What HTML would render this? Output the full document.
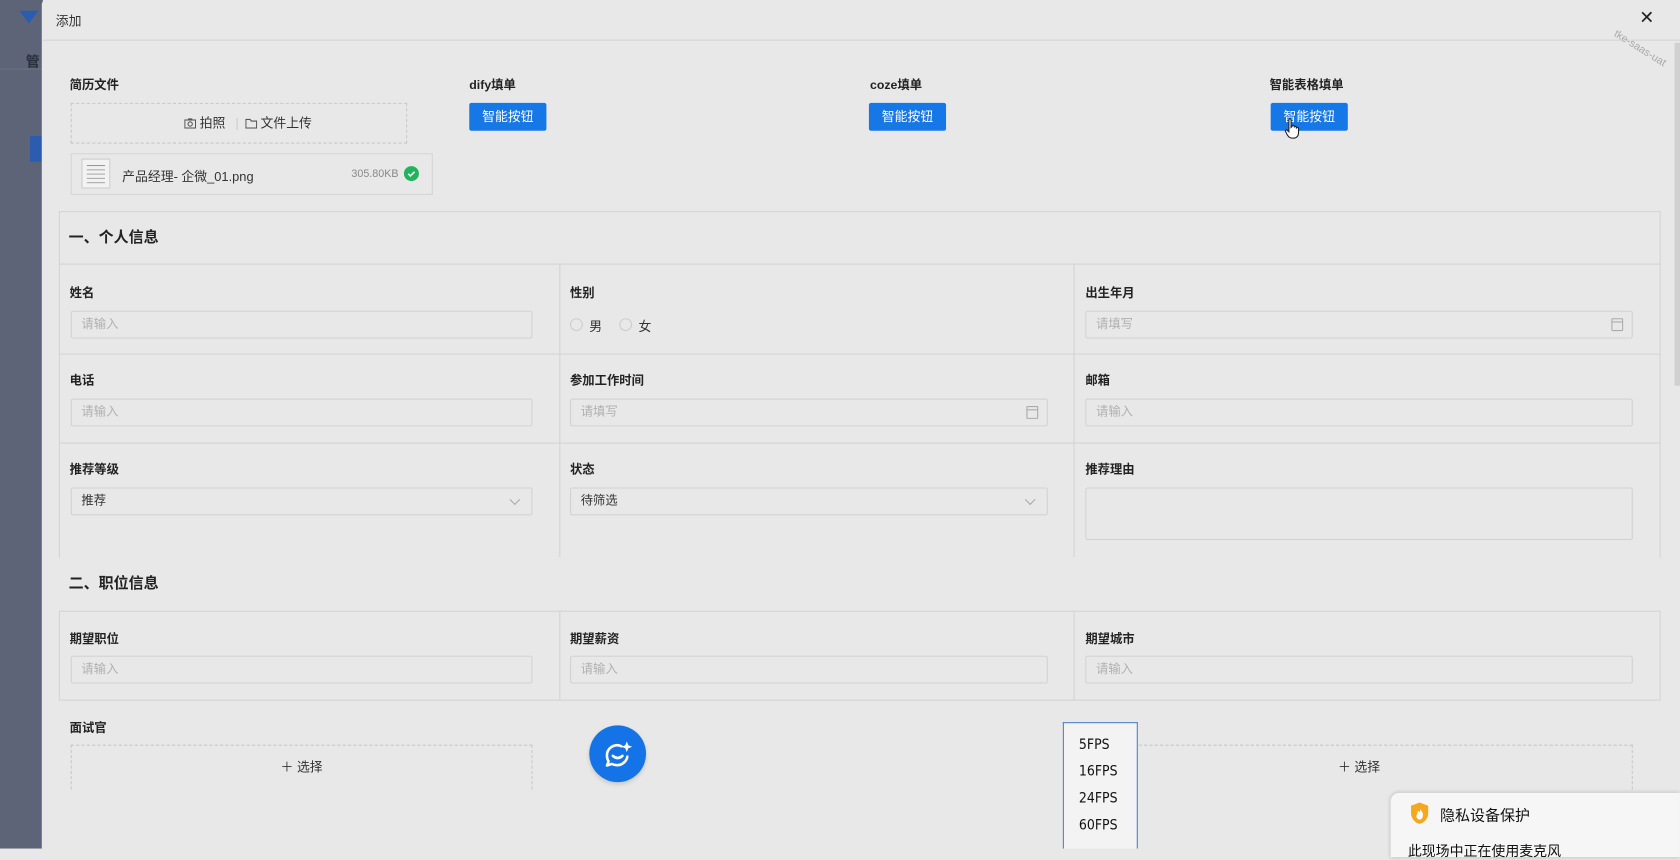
<!DOCTYPE html>
<html><head><meta charset="utf-8"><style>
*{margin:0;padding:0;box-sizing:border-box}
html,body{width:1680px;height:848px;overflow:hidden;background:#e8e8e8;font-family:"Liberation Sans","Noto Sans CJK SC",sans-serif}
#w{position:absolute;left:0;top:0;width:1568px;height:792px;transform:scale(1.0714);transform-origin:0 0}
.a{position:absolute}
.lbl{position:absolute;font-size:11.5px;font-weight:bold;color:#222;line-height:14px}
.inp{position:absolute;height:26px;border:1px solid #d2d2d2;border-radius:2px;font-size:11.5px;color:#b0b0b0;padding-left:9px;line-height:24px;background:#e8e8e8}
.btn{position:absolute;width:72px;height:26px;background:#1677e6;border-radius:2px;color:#fff;font-size:12px;text-align:center;line-height:26px}
.vl{position:absolute;width:1px;background:#d4d4d4}
.hl{position:absolute;height:1px;background:#d4d4d4}
.cal{position:absolute;right:8px;top:6px;width:11px;height:12px;border:1px solid #aaa;border-radius:1px}
.cal:before{content:"";position:absolute;left:0;right:0;top:2px;height:1px;background:#aaa}
.chev{position:absolute;right:12px;top:7px;width:7px;height:7px;border-right:1px solid #aaa;border-bottom:1px solid #aaa;transform:rotate(45deg)}
</style></head><body><div id="w">
<div class="a" style="left:0;top:0;width:40px;height:792px;background:#5d6477"></div>
<div class="a" style="left:18px;top:10px;width:0;height:0;border-left:9px solid transparent;border-right:9px solid transparent;border-top:12px solid #2a5db0"></div>
<div class="a" style="left:24px;top:47px;font-size:13px;font-weight:bold;color:#2a2e3a">管</div>
<div class="a" style="left:0;top:64px;width:40px;height:1px;background:#6b7284"></div>
<div class="a" style="left:28px;top:127px;width:12px;height:24px;background:#2c5cae"></div>
<div class="a" style="left:39px;top:0;width:1529px;height:792px;background:#e8e8e8;border-radius:4px 0 0 0"></div>
<div class="a" style="left:52px;top:11px;font-size:12px;color:#333">添加</div>
<div class="hl" style="left:39px;top:37px;width:1529px"></div>
<div class="a" style="left:1530px;top:7px;font-size:17px;color:#222">✕</div>
<div class="a" style="left:1503px;top:40px;font-size:10px;color:#aaa;transform:rotate(32deg)">tke-saas-uat</div>
<div class="a" style="left:1563px;top:40px;width:5px;height:320px;background:#d0d0d0"></div>
<div class="lbl" style="left:65px;top:73px">简历文件</div>
<div class="lbl" style="left:438px;top:73px">dify填单</div>
<div class="lbl" style="left:812px;top:73px">coze填单</div>
<div class="lbl" style="left:1185px;top:73px">智能表格填单</div>
<div class="a" style="left:66px;top:96px;width:314px;height:38px;border:1px dashed #c8c8c8"></div>
<div class="a" style="left:172px;top:108px;font-size:12px;color:#333;line-height:14px">
<svg width="11" height="10" viewBox="0 0 11 10" style="vertical-align:-1px"><rect x="0.5" y="2" width="10" height="7.5" fill="none" stroke="#555"/><rect x="3.5" y="0.5" width="4" height="1.5" fill="#555"/><circle cx="5.5" cy="5.7" r="2" fill="none" stroke="#555"/></svg> 拍照 <span style="color:#ccc;margin:0 6px">|</span><svg width="11" height="10" viewBox="0 0 11 10" style="vertical-align:-1px"><path d="M0.5 1.5h4l1 1.5h5v6.5h-10z" fill="none" stroke="#555"/></svg> 文件上传</div>
<div class="a" style="left:66px;top:143px;width:338px;height:39px;border:1px solid #d6d6d6"></div>
<div class="a" style="left:76px;top:148px;width:27px;height:28px;border:1px solid #ccc;background:#f2f2f2"><div style="margin:5px 4px;height:1px;background:#999;box-shadow:0 4px #aaa,0 8px #aaa,0 12px #aaa,0 16px #aaa"></div></div>
<div class="a" style="left:114px;top:156px;font-size:12px;color:#333">产品经理- 企微_01.png</div>
<div class="a" style="left:328px;top:157px;font-size:10px;color:#888">305.80KB</div>
<div class="a" style="left:377px;top:155px;width:14px;height:14px;border-radius:50%;background:#22b35e"><svg width="14" height="14" style="position:absolute;left:0;top:0"><path d="M4 7.2l2 2 4-4" fill="none" stroke="#fff" stroke-width="1.5"/></svg></div>
<div class="btn" style="left:438px;top:96px">智能按钮</div>
<div class="btn" style="left:811px;top:96px">智能按钮</div>
<div class="btn" style="left:1186px;top:96px">智能按钮</div>
<svg class="a" style="left:1199px;top:110px" width="16" height="20" viewBox="0 0 16 20"><path d="M4 2c0-1.5 2-1.5 2 0v7l1-1c0-1.3 2-1.3 2 0v1c0-1.3 2-1.3 2 0v1c0-1.3 2-1.3 2 0v4c0 3-2 5-5 5s-4-1-5.5-3L1 13c-.8-1 .4-2.3 1.4-1.5L4 13z" fill="#fff" stroke="#222" stroke-width="1"/></svg>
<div class="a" style="left:55px;top:197px;width:1495px;height:324px;border:1px solid #d4d4d4;border-bottom:none"></div>
<div class="a" style="left:64px;top:211px;font-size:14px;font-weight:bold;color:#222">一、个人信息</div>
<div class="hl" style="left:55px;top:246px;width:1495px"></div>
<div class="hl" style="left:55px;top:330px;width:1495px"></div>
<div class="hl" style="left:55px;top:413px;width:1495px"></div>
<div class="vl" style="left:522px;top:246px;height:274px"></div>
<div class="vl" style="left:1002px;top:246px;height:274px"></div>
<div class="lbl" style="left:65px;top:267px">姓名</div>
<div class="inp" style="left:66px;top:290px;width:431px">请输入</div>
<div class="lbl" style="left:532px;top:267px">性别</div>
<div class="a" style="left:532px;top:297px;width:12px;height:12px;border:1px solid #ccc;border-radius:50%"></div>
<div class="a" style="left:550px;top:296px;font-size:12px;color:#333">男</div>
<div class="a" style="left:578px;top:297px;width:12px;height:12px;border:1px solid #ccc;border-radius:50%"></div>
<div class="a" style="left:596px;top:296px;font-size:12px;color:#333">女</div>
<div class="lbl" style="left:1013px;top:267px">出生年月</div>
<div class="inp" style="left:1013px;top:290px;width:511px">请填写<span class="cal"></span></div>
<div class="lbl" style="left:65px;top:349px">电话</div>
<div class="inp" style="left:66px;top:372px;width:431px">请输入</div>
<div class="lbl" style="left:532px;top:349px">参加工作时间</div>
<div class="inp" style="left:532px;top:372px;width:446px">请填写<span class="cal"></span></div>
<div class="lbl" style="left:1013px;top:349px">邮箱</div>
<div class="inp" style="left:1013px;top:372px;width:511px">请输入</div>
<div class="lbl" style="left:65px;top:432px">推荐等级</div>
<div class="inp" style="left:66px;top:455px;width:431px;color:#333">推荐<span class="chev"></span></div>
<div class="lbl" style="left:532px;top:432px">状态</div>
<div class="inp" style="left:532px;top:455px;width:446px;color:#333">待筛选<span class="chev"></span></div>
<div class="lbl" style="left:1013px;top:432px">推荐理由</div>
<div class="inp" style="left:1013px;top:455px;width:511px;height:49px"></div>
<div class="a" style="left:64px;top:534px;font-size:14px;font-weight:bold;color:#222">二、职位信息</div>
<div class="a" style="left:55px;top:570px;width:1495px;height:84px;border:1px solid #d4d4d4"></div>
<div class="vl" style="left:522px;top:570px;height:84px"></div>
<div class="vl" style="left:1002px;top:570px;height:84px"></div>
<div class="lbl" style="left:65px;top:590px">期望职位</div>
<div class="inp" style="left:66px;top:612px;width:431px">请输入</div>
<div class="lbl" style="left:532px;top:590px">期望薪资</div>
<div class="inp" style="left:532px;top:612px;width:446px">请输入</div>
<div class="lbl" style="left:1013px;top:590px">期望城市</div>
<div class="inp" style="left:1013px;top:612px;width:511px">请输入</div>
<div class="lbl" style="left:65px;top:673px">面试官</div>
<div class="a" style="left:66px;top:695px;width:431px;height:42px;border:1px dashed #c8c8c8;border-bottom:none;text-align:center;font-size:12px;color:#333;line-height:40px">＋ 选择</div>
<div class="a" style="left:1013px;top:695px;width:511px;height:42px;border:1px dashed #c8c8c8;border-bottom:none;text-align:center;font-size:12px;color:#333;line-height:40px">＋ 选择</div>
<div class="a" style="left:550px;top:677px;width:53px;height:53px;border-radius:50%;background:#1473e6;box-shadow:0 2px 4px rgba(0,0,0,.15)">
<svg width="53" height="53" viewBox="0 0 53 53"><path d="M30 19.5A9.5 9.5 0 0 0 16.5 28.5c0 2 .5 3.5 1.5 5l-1.5 4 4.5-1.5c1.5.8 3.2 1.2 5 1.2 5 0 9-4 9.5-8" fill="none" stroke="#fff" stroke-width="2.4" stroke-linecap="round" stroke-linejoin="round"/><path d="M22 28.5q4.5 4 9 0" fill="none" stroke="#fff" stroke-width="2.4" stroke-linecap="round"/><path d="M35 15l1.4 3.6 3.6 1.4-3.6 1.4-1.4 3.6-1.4-3.6-3.6-1.4 3.6-1.4z" fill="#fff"/></svg></div>
<div class="a" style="left:992px;top:674px;width:70px;height:118px;background:#f3f3f3;border:1px solid #4a7fd0;border-bottom:none;font-size:13px;color:#111;font-family:'DejaVu Sans Condensed','Liberation Sans Narrow',sans-serif">
<div style="position:absolute;left:14px;top:13px">5FPS</div>
<div style="position:absolute;left:14px;top:38px">16FPS</div>
<div style="position:absolute;left:14px;top:63px">24FPS</div>
<div style="position:absolute;left:14px;top:88px">60FPS</div></div>
<div class="a" style="left:1298px;top:740px;width:270px;height:60px;background:#f6f6f6;border-radius:8px 0 0 0;box-shadow:0 0 4px rgba(0,0,0,.2)">
<svg style="position:absolute;left:18px;top:8px" width="18" height="22" viewBox="0 0 18 22"><path d="M9 1l8 3v7c0 5-4 9-8 10-4-1-8-5-8-10V4z" fill="#f5a81c"/><path d="M9 6c1 3 4 4 3 8a3 3 0 0 1-6 0c0-2 2-3 1-5 1 0 2 1 2 2 0-2 1-3 0-5z" fill="#fff"/></svg>
<div style="position:absolute;left:46px;top:11px;font-size:14px;color:#111">隐私设备保护</div>
<div style="position:absolute;left:16px;top:44px;font-size:13px;color:#111">此现场中正在使用麦克风</div></div>
</div></body></html>
